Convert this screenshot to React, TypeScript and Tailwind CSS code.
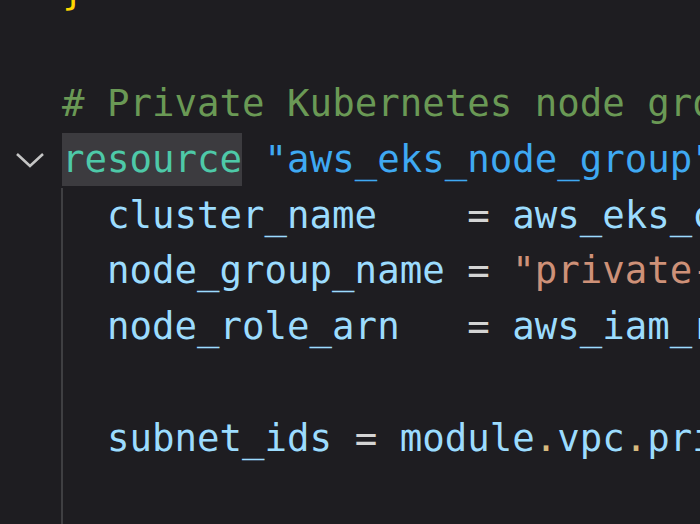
import React from "react";

const mono = { fontFamily: '"DejaVu Sans Mono", "Liberation Mono", monospace' };

function Line({ children, className = "" }: { children?: React.ReactNode; className?: string }) {
  return (
    <div className={"h-[55.7px] leading-[55.7px] whitespace-pre " + className}>{children}</div>
  );
}

export default function App() {
  return (
    <div className="w-[700px] h-[524px] overflow-hidden bg-[#1e1d21] text-[37.4px] text-[#9cdcfe]" style={mono}>
      <div className="flex -mt-[35px]">
        {/* gutter */}
        <div className="w-[62px] shrink-0 flex flex-col">
          <Line />
          <Line />
          <Line />
          <Line className="flex items-center">
            <svg width="30" height="18" viewBox="0 0 30 18" className="ml-[15px]">
              <path d="M2 3 L15 15 L28 3" fill="none" stroke="#c5c5c5" strokeWidth="2.6" />
            </svg>
          </Line>
        </div>
        {/* code */}
        <div className="flex-1 flex flex-col min-w-0">
          <Line><span className="text-[#ffd700]">{"}"}</span></Line>
          <Line />
          <Line><span className="text-[#6a9955]"># Private Kubernetes node group</span></Line>
          <Line>
            <span className="bg-[#3c3b3f] text-[#4ec9a8] inline-block h-[53px] leading-[53px] align-top mt-[1px]">resource</span>
            <span className="text-[#d4d4d4]"> </span>
            <span className="text-[#3fa9f2]">"aws_eks_node_group"</span>
            <span className="text-[#3fa9f2]"> "private"</span>
          </Line>
          <div className="border-l-2 border-[#3f3f42] -ml-[1px] pl-[44px]">
            <Line>cluster_name    <span className="text-[#d4d4d4]">=</span> aws_eks_cluster.main.name</Line>
            <Line>node_group_name <span className="text-[#d4d4d4]">=</span> <span className="text-[#ce9178]">"private-nodes"</span></Line>
            <Line>node_role_arn   <span className="text-[#d4d4d4]">=</span> aws_iam_role.nodes.arn</Line>
            <Line />
            <Line>subnet_ids <span className="text-[#d4d4d4]">=</span> module<span className="text-[#d7ba7d]">.</span>vpc<span className="text-[#d7ba7d]">.</span>private_subnets</Line>
            <Line />
            <Line />
          </div>
        </div>
      </div>
    </div>
  );
}
